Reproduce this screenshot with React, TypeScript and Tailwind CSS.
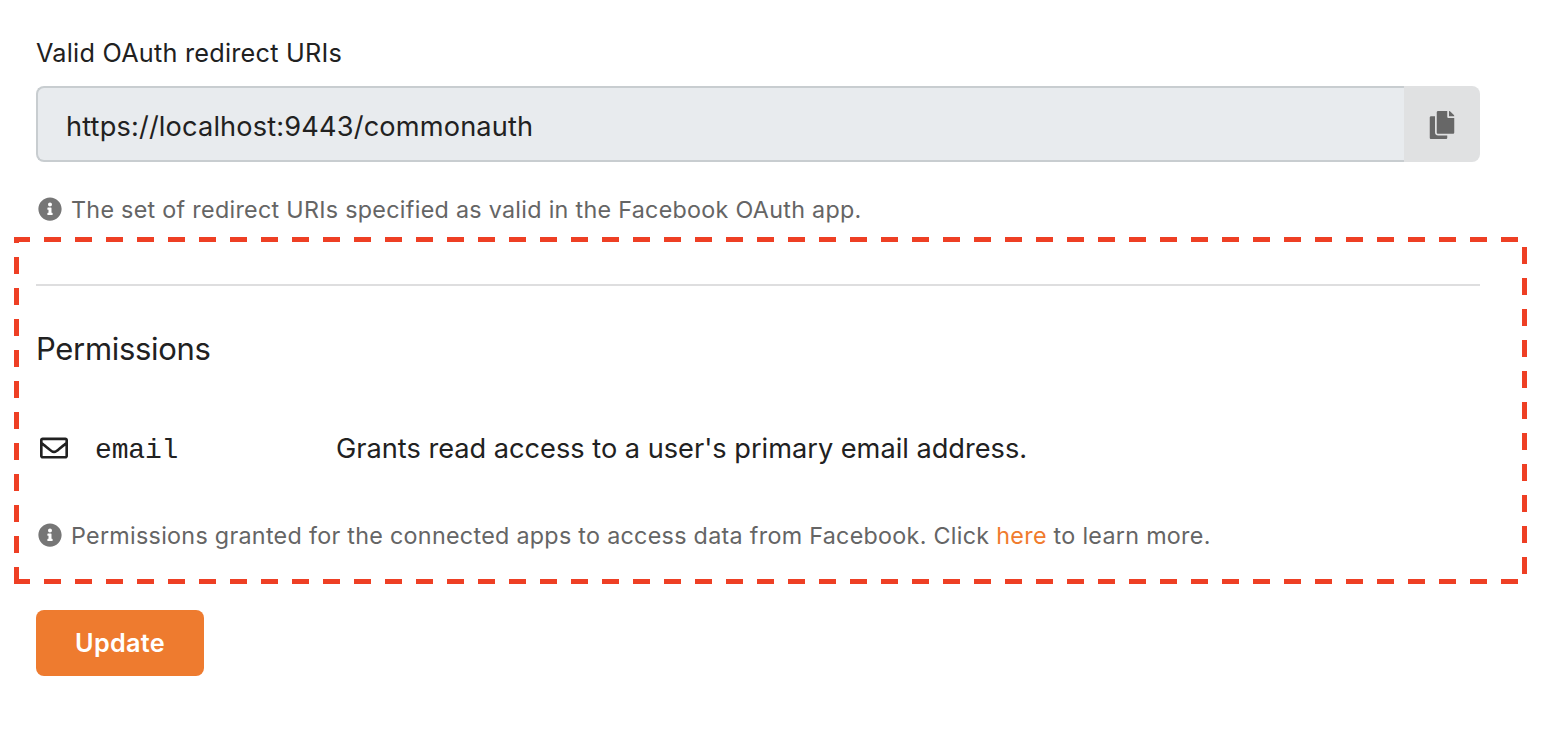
import type { ReactNode } from "react";
import { FaCopy, FaInfoCircle, FaRegEnvelope } from "react-icons/fa";

function Hint({ children }: { children: ReactNode }) {
  return (
    <div className="flex h-8 items-center pl-[2px] text-[23.3px] leading-8 tracking-[0.293px] text-[#656565]">
      <FaInfoCircle className="mr-[9px] size-6 shrink-0 text-[#767676]" />
      <p className="whitespace-pre pt-0.5">{children}</p>
    </div>
  );
}

function HighlightFrame() {
  return (
    <svg
      className="pointer-events-none absolute left-[14px] top-[237px]"
      width="1513"
      height="347"
      stroke="#ee3f24"
      strokeWidth="5"
      strokeDasharray="17 14"
      shapeRendering="crispEdges"
      aria-hidden="true"
    >
      <line x1="0" y1="2.5" x2="1505" y2="2.5" strokeDashoffset="1" />
      <line x1="0" y1="344.5" x2="1505" y2="344.5" strokeDashoffset="1" />
      <line x1="2.5" y1="0" x2="2.5" y2="347" strokeDashoffset="11" />
      <line x1="1510.5" y1="10" x2="1510.5" y2="337" />
    </svg>
  );
}

export default function App() {
  return (
    <main className="relative h-[740px] overflow-hidden bg-white pl-9 pt-[37px] font-['Inter',sans-serif] text-[#212121]">
      <div className="flex w-[1444px] flex-col">
        <label className="h-8 text-[25.25px] leading-8 tracking-[0.23px]">Valid OAuth redirect URIs</label>

        <div className="mt-[17px] flex h-[76px]">
          <div className="flex flex-1 items-center rounded-l-lg border-2 border-r-0 border-[#c8cdd0] bg-[#e8ebee] pl-7 pt-1.5 text-[27.2px] tracking-[0.15px]">
            https://localhost:9443/commonauth
          </div>
          <button
            type="button"
            aria-label="Copy"
            className="flex w-[76px] items-center justify-center rounded-r-lg bg-[#e0e1e2] pr-px pt-0.5 text-[#676767]"
          >
            <FaCopy className="size-7" />
          </button>
        </div>

        <div className="mt-[31px]">
          <Hint>The set of redirect URIs specified as valid in the Facebook OAuth app.</Hint>
        </div>

        <hr className="mt-[59px] border-t-2 border-[#dededf]" />

        <h2 className="mt-[43px] h-10 text-[31px] leading-10 tracking-[-0.32px]">Permissions</h2>

        <div className="mt-[59px] flex h-10 items-center pl-1">
          <FaRegEnvelope className="size-7 shrink-0" />
          <div className="ml-[27px] flex flex-1 items-baseline pt-1 leading-10">
            <code className="w-[241px] font-['Liberation_Mono',monospace] text-[28px] tracking-[-0.15px]">email</code>
            <p className="text-[27.2px] tracking-[-0.01px]">Grants read access to a user's primary email address.</p>
          </div>
        </div>

        <div className="mt-[51px]">
          <Hint>
            {"Permissions granted for the connected apps to access data from Facebook. Click "}
            <a href="#" className="text-[#f07b2d]">here</a>
            {" to learn more."}
          </Hint>
        </div>

        <button
          type="button"
          className="mt-[59px] h-[66px] w-[168px] rounded-lg bg-[#ee7b2f] pt-0.5 text-[25.25px] font-semibold tracking-[0.3px] text-white"
        >
          Update
        </button>
      </div>
      <HighlightFrame />
    </main>
  );
}
